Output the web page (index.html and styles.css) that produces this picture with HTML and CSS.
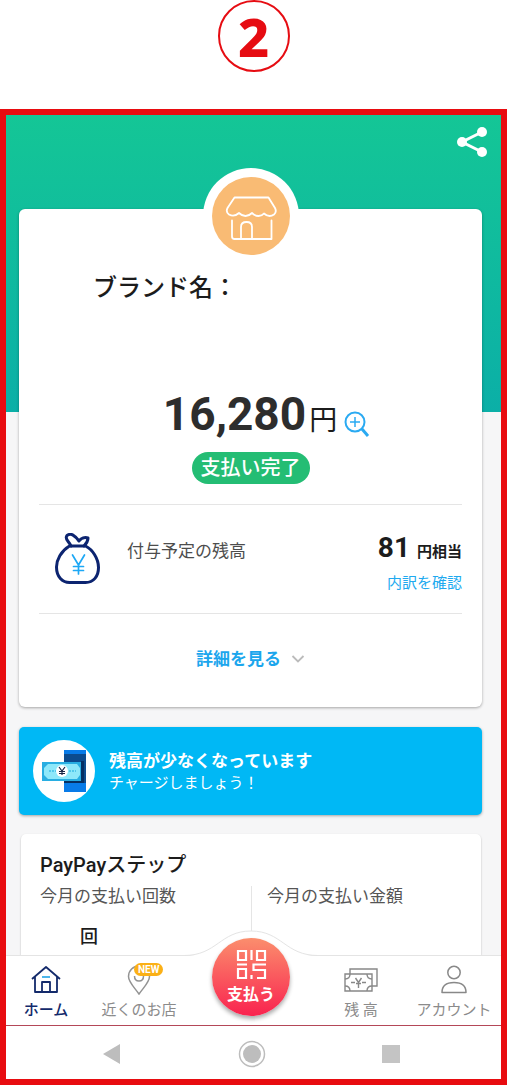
FILE: index.html
```html
<!DOCTYPE html>
<html lang="ja">
<head>
<meta charset="utf-8">
<meta name="viewport" content="width=device-width, initial-scale=1">
<title>支払い完了</title>
<link rel="stylesheet" href="styles.css">
</head>
<body>
<div class="step">2</div>
<div class="phone">
  <main class="screen">
    <header class="topbar">
      <button class="icon-button" type="button" aria-label="共有">
        <svg width="32" height="32" viewBox="0 0 32 32"><path d="M26 6 6 16l20 10" fill="none" stroke="#fff" stroke-width="3"/><circle cx="26" cy="6" r="5" fill="#fff"/><circle cx="6" cy="16" r="5" fill="#fff"/><circle cx="26" cy="26" r="5" fill="#fff"/></svg>
      </button>
    </header>

    <section class="card receipt">
      <div class="shop">
        <svg width="78" height="78" viewBox="0 0 78 78"><circle cx="39" cy="39" r="39" fill="#f9bb74"/><g fill="none" stroke="#fff" stroke-width="1.800" stroke-linejoin="round" stroke-linecap="round"><path d="M22.500 20.500h34L63 31q2 4-1 6.500-5 3.500-10-1-2 2.500-5.500 2.500T40 36q-3 3-6.500 3T27 36q-5 4.500-10 1.500-3.500-2.500-1.500-6.500z"/><path d="M20 43.500v16q0 2.500 2.500 2.500h37v-18.500M29 62v-12q0-5 5.500-5t5.500 5v12"/></g></svg>
      </div>
      <h1 class="brand">ブランド名：</h1>
      <div class="total">
        <span class="total-number">16,280</span><span class="total-unit">円</span>
        <button class="icon-button zoom" type="button" aria-label="拡大">
          <svg width="26" height="26" viewBox="0 0 26 26" fill="none" stroke="#2aaaf2"><circle cx="11" cy="11" r="9.500" stroke-width="2"/><path d="M6 11h10M11 6v10" stroke-width="1.500"/><path d="m18 18 6 7" stroke-width="3"/></svg>
        </button>
      </div>
      <p class="status">支払い完了</p>
      <div class="bonus">
        <svg class="bag" width="46" height="52" viewBox="0 0 46 52" fill="none" stroke="#0c2470" stroke-width="3" stroke-linejoin="round" stroke-linecap="round"><path d="M14.500 13C6 18 1.500 27 1.500 34c0 10 6 15.500 13 15.500h16c8 0 13-6 13-15 0-9-6-18-13-21.500z"/><path d="M16 13C14 8 9 6 12 2.500c4-3 8 0 12 5.500 2-3 6-4 9-3 0 4-2 6-4 8"/><path d="m17.500 22 6 10 6-10M23.500 32v9M18.500 33.500h10M18.500 37.500h10" stroke="#1da8f5" stroke-width="1.700"/></svg>
        <span class="bonus-label">付与予定の残高</span>
        <div class="bonus-value">
          <p class="points"><span class="points-number">81</span>円相当</p>
          <a class="breakdown" href="#">内訳を確認</a>
        </div>
      </div>
      <button class="details" type="button">詳細を見る
        <svg width="14" height="8" viewBox="0 0 14 8"><path d="m1.500 1 5.500 5.500L12.500 1" fill="none" stroke="#bbb" stroke-width="1.800"/></svg>
      </button>
    </section>

    <section class="banner">
      <svg width="62" height="62" viewBox="0 0 62 62"><circle cx="31" cy="31" r="31" fill="#fff"/><path fill="#0c4b8e" d="M31 10h22v42H31z"/><path fill="#087be8" d="M31 10h22v4H31zM31 43h22v9H31z"/><path fill="#062f61" d="M48 21h3v22H31v-2h17z"/><path fill="#28aee2" d="M9 22h39v19H9z"/><path fill="#8ee8fa" d="M15 24h29l3 4v7l-3 4H15l-4-4v-7z"/><path d="M16 31h7M36 31h7" stroke="#1aaadd" stroke-dasharray="2 1"/><circle cx="29" cy="31" r="6" fill="#fff"/><path d="m26 27 3 4 3-4M29 31v4M26 31.500h6M26 33.500h6" fill="none" stroke="#182343" stroke-width="1.200"/></svg>
      <div>
        <p class="banner-title">残高が少なくなっています</p>
        <p class="banner-text">チャージしましょう！</p>
      </div>
    </section>

    <section class="steps">
      <h2 class="steps-title">PayPayステップ</h2>
      <div class="steps-grid">
        <div><p class="steps-label">今月の支払い回数</p><p class="steps-count">回</p></div>
        <div class="steps-amount"><p class="steps-label">今月の支払い金額</p></div>
      </div>
    </section>
  </main>

  <nav class="tabs">
    <a class="tab active" href="#">
      <svg width="30" height="30" viewBox="0 0 30 30" fill="none" stroke="#132a6b" stroke-width="1.800" stroke-linejoin="round"><path d="M1 14 15 2l14 12M4 12v15h22V12M11 27V17h8v10"/><path d="M11 12h8" stroke="#39aee8"/></svg>
      ホーム
    </a>
    <a class="tab" href="#">
      <svg width="30" height="30" viewBox="0 0 30 30" fill="none" stroke="#939393" stroke-width="1.500"><path d="M15 29C10 22 4.500 17 4.500 11.500a10.500 10.500 0 0 1 21 0C25.500 17 20 22 15 29z"/><path d="M10.500 11q0 5 4.500 5t4.500-5"/></svg>
      <span class="badge">NEW</span>
      近くのお店
    </a>
    <div class="pay-slot">
      <svg class="hump" width="134" height="27" viewBox="0 0 134 27"><path d="M0 26C33 26 36 1 67 1s34 25 67 25v1H0z" fill="#fff"/><path d="M0 25.500C33 25.500 36 1 67 1s34 24.500 67 24.500" fill="none" stroke="#e4e4e4"/></svg>
      <button class="pay" type="button">
        <svg width="31" height="31" viewBox="0 0 31 31" fill="none" stroke="#fff" stroke-width="2.200"><path d="M2 2h8v9H2zM21 2h8v9h-8zM15.500 1v10M1 15.500h10M2 20h8v9H2zM15.500 26v4M30 15.500H17.500V21H29v8h-8"/></svg>
        支払う
      </button>
    </div>
    <a class="tab" href="#">
      <svg width="34" height="30" viewBox="0 0 34 30" fill="none" stroke="#888" stroke-width="1.400"><path d="M6 9V4h27v17h-5M1 9h27v17H1z"/><path d="M1 14q5 0 5-5M23 9q0 5 5 5M1 21q5 0 5 5M23 26q0-5 5-5M7 17.500h4M18 17.500h4M11.500 13l3 4.500 3-4.500M14.500 17v6M12 18.500h5"/></svg>
      残 高
    </a>
    <a class="tab" href="#">
      <svg width="30" height="30" viewBox="0 0 30 30" fill="none" stroke="#888" stroke-width="1.500" stroke-linejoin="round"><circle cx="15" cy="7.500" r="6.200"/><path d="M3 27.500q0-10 12-10t12 10z"/></svg>
      アカウント
    </a>
  </nav>

  <div class="system">
    <button class="icon-button" type="button" aria-label="戻る"><svg width="28" height="28" viewBox="0 0 28 28"><path d="M22 4v20L5 14z" fill="#bdbdbd"/></svg></button>
    <button class="icon-button" type="button" aria-label="ホーム画面"><svg width="28" height="28" viewBox="0 0 28 28"><circle cx="14" cy="14" r="12.500" fill="none" stroke="#bdbdbd" stroke-width="1.500"/><circle cx="14" cy="14" r="9" fill="#bdbdbd"/></svg></button>
    <button class="icon-button" type="button" aria-label="履歴"><svg width="28" height="28" viewBox="0 0 28 28"><path d="M4 5h18v18H4z" fill="#c4c4c4"/></svg></button>
  </div>
</div>
</body>
</html>
```

FILE: styles.css
```css
* { box-sizing: border-box; }
body {
  margin: 0;
  padding-right: 1px;
  background: #fff;
  color: #1c1c1c;
  font-family: Roboto, "Noto Sans CJK JP", sans-serif;
}
h1, h2, p { margin: 0; }
svg { display: block; }
a { text-decoration: none; }
button { border: 0; padding: 0; background: none; font-family: inherit; }
.icon-button { display: block; }

.step {
  display: flex;
  align-items: center;
  justify-content: center;
  width: 72px;
  height: 72px;
  margin: 0 auto 37px;
  border: 2px solid #e60c12;
  border-radius: 50%;
  color: #e60c12;
  font: 800 54px/1 "Noto Sans", sans-serif;
}
.phone { border: 6px solid #e80c10; background: #fff; }
.screen {
  padding: 11px 19px 0 13px;
  background: #f6f6f7 linear-gradient(#14c696, #0bafa7) no-repeat 0 0 / 100% 297px;
}
.topbar { display: flex; justify-content: flex-end; margin-right: -6px; padding-bottom: 51px; }

.card {
  position: relative;
  border-radius: 6px;
  background: #fff;
  box-shadow: 0 1px 3px #0005;
}
.receipt { padding: 61px 20px 34px; text-align: center; }
.shop {
  position: absolute;
  top: -41px;
  left: 50%;
  padding: 9px;
  margin-left: -48px;
  border-radius: 50%;
  background: #fff;
}
.brand {
  padding-left: 54px;
  text-align: left;
  font-size: 24px;
  line-height: 36px;
  font-weight: 500;
}
.total {
  display: flex;
  align-items: baseline;
  justify-content: center;
  padding: 80px 0 0 32px;
  line-height: 56px;
}
.total-number { font-size: 46px; font-weight: 700; color: #2d2d2d; }
.total-unit { margin: 0 7px 0 3px; font-size: 28px; }
.zoom { align-self: center; padding-top: 12px; }
.status {
  width: max-content;
  margin: 3px auto 20px;
  padding: 0 9px;
  border-radius: 16px;
  background: #24bd74;
  color: #fff;
  font-size: 20px;
  line-height: 32px;
  font-weight: 500;
}
.bonus {
  display: flex;
  align-items: flex-start;
  padding: 28px 0 16px 16px;
  border-top: 1px solid #e5e5e5;
  border-bottom: 1px solid #e5e5e5;
}
.bonus-label {
  padding-left: 26px;
  color: #4d4d4d;
  font-size: 17px;
  line-height: 36px;
}
.bonus-value { margin-left: auto; text-align: right; }
.points {
  display: flex;
  align-items: baseline;
  justify-content: flex-end;
  gap: 7px;
  font-size: 15px;
  line-height: 30px;
  font-weight: 700;
}
.points-number { font-size: 28px; }
.breakdown { display: block; margin-top: 2px; color: #20a9ef; font-size: 15px; line-height: 28px; }
.details {
  display: flex;
  align-items: center;
  gap: 10px;
  margin: 31px auto 0;
  color: #1ca6ed;
  font-size: 17px;
  line-height: 28px;
  font-weight: 700;
}

.banner {
  display: flex;
  align-items: center;
  gap: 14px;
  margin-top: 20px;
  padding: 13px 14px;
  border-radius: 5px;
  background: #00b8f5;
  box-shadow: 0 1px 3px #0005;
  color: #fff;
}
.banner-title { font-size: 17px; line-height: 24px; font-weight: 700; }
.banner-text { font-size: 15px; line-height: 20px; }

.steps {
  margin: 19px 1px 0 2px;
  padding: 18px 19px 0;
  border-radius: 5px 5px 0 0;
  background: #fff;
  box-shadow: 0 1px 2px #0004;
}
.steps-title { font-size: 20px; line-height: 26px; font-weight: 500; }
.steps-grid { display: grid; grid-template-columns: 1fr 1fr; }
.steps-label { color: #555; font-size: 17px; line-height: 36px; }
.steps-count { padding: 5px 0 0 40px; font-size: 18px; line-height: 36px; font-weight: 500; }
.steps-amount { margin-top: 8px; padding-left: 15px; border-left: 1px solid #e5e5e5; }
.steps-amount .steps-label { line-height: 20px; }

.tabs {
  position: relative;
  display: grid;
  grid-template-columns: 80fr 106fr 118fr 102fr 84fr;
  padding-right: 5px;
  border-top: 1px solid #e4e4e4;
  border-bottom: 1px solid #b44858;
  background: #fff;
}
.tab {
  position: relative;
  display: flex;
  flex-direction: column;
  align-items: center;
  gap: 4px;
  padding: 9px 0 4px;
  color: #8b8b8b;
  font-size: 15px;
  line-height: 22px;
  white-space: nowrap;
}
.active { color: #132a6b; font-weight: 500; }
.badge {
  position: absolute;
  top: 7px;
  left: 50%;
  margin-left: -5px;
  padding: 0 4px;
  border-radius: 7px;
  background: #fbb016;
  color: #fff;
  font-size: 10px;
  line-height: 13px;
  font-weight: 700;
}
.pay-slot { position: relative; }
.hump { position: absolute; top: -26px; left: 50%; margin-left: -67px; }
.pay {
  position: absolute;
  top: -18px;
  left: 50%;
  display: flex;
  flex-direction: column;
  align-items: center;
  gap: 3px;
  width: 78px;
  height: 78px;
  margin-left: -39px;
  padding-top: 11px;
  border-radius: 50%;
  background: linear-gradient(#fb8e6d, #f9234f);
  box-shadow: 0 3px 4px #0005;
  color: #fff;
  font-size: 16px;
  line-height: 24px;
  font-weight: 700;
}
.system {
  display: grid;
  grid-template-columns: 1fr 1fr 1fr;
  justify-items: center;
  padding: 14px 39px 11px 36px;
}
```
